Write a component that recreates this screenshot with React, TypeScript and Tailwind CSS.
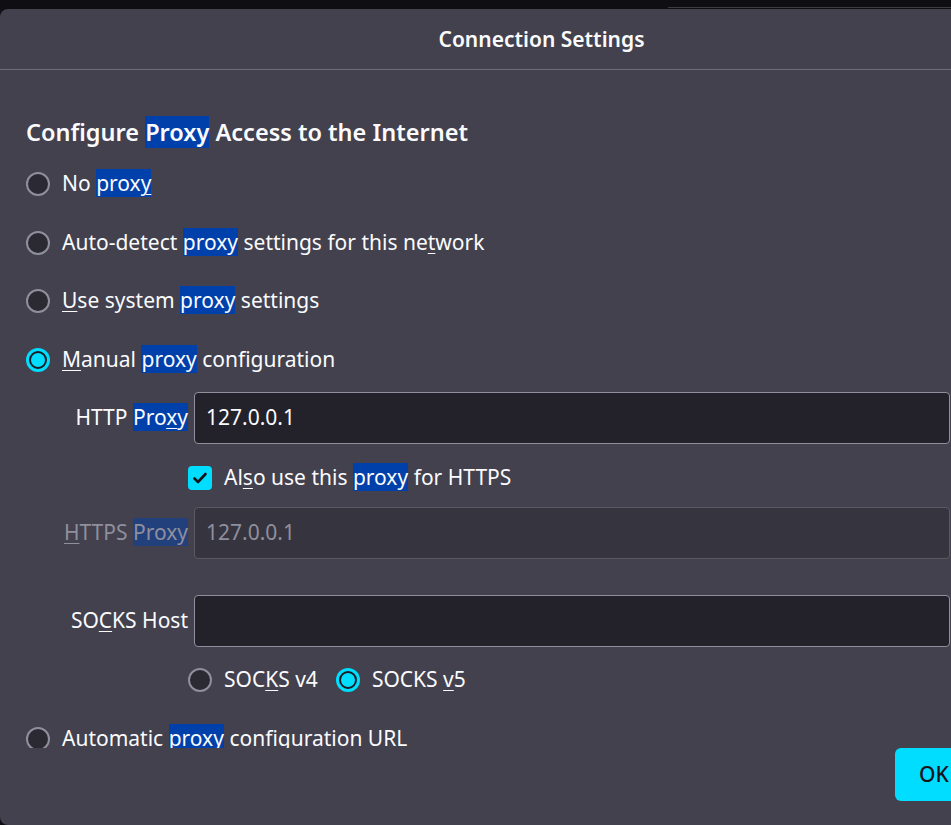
import React from "react";

const font = { fontFamily: '"Noto Sans", "Open Sans", sans-serif' };

function Hl({ children, dim = false }: { children: React.ReactNode; dim?: boolean }) {
    return <span className={dim ? "bg-[#22407c]" : "bg-[#0040aa]"}>{children}</span>;
}

function Radio({ checked = false }: { checked?: boolean }) {
    if (checked) {
        return (
            <div className="w-[24px] h-[24px] rounded-full bg-[#00ddff] flex items-center justify-center shrink-0">
                <div className="w-[18px] h-[18px] rounded-full border-[2px] border-[#1c1b22] bg-[#00ddff]" />
            </div>
        );
    }
    return <div className="w-[24px] h-[24px] rounded-full border-[2px] border-[#8f8f9d] bg-[#2b2a33] shrink-0" />;
}

function Checkbox() {
    return (
        <div className="w-[24px] h-[24px] rounded-[4px] bg-[#00ddff] flex items-center justify-center shrink-0">
            <svg width="16" height="16" viewBox="0 0 16 16" fill="none">
                <path d="M2.5 8.5 L6 12 L13.5 4" stroke="#15141a" strokeWidth="2.6" strokeLinecap="round" strokeLinejoin="round" />
            </svg>
        </div>
    );
}

function U({ children }: { children: React.ReactNode }) {
    return <span className="underline underline-offset-[3px] decoration-[1px]">{children}</span>;
}

function Field({ label, value, disabled = false }: { label: React.ReactNode; value: string; disabled?: boolean }) {
    return (
        <div className="flex items-center h-[52px]">
            <div className={`w-[168px] text-right pr-[6px] whitespace-nowrap ${disabled ? "text-[#8f8f9d]" : "text-[#fbfbfe]"}`}>{label}</div>
            <div
                className={`flex-1 h-[52px] rounded-[4px] border flex items-center pl-[11px] ${
                    disabled ? "bg-[#36353f] border-[#5b5a63] text-[#8f8f9d]" : "bg-[#23222b] border-[#8f8f9d] text-[#fbfbfe]"
                }`}
            >
                {value}
            </div>
        </div>
    );
}

export default function App() {
    return (
        <div className="w-[951px] h-[825px] bg-[#0f0e13] overflow-hidden text-[#fbfbfe]" style={font}>
            {/* window edge behind */}
            <div className="h-[9px] flex">
                <div className="ml-[668px] mt-[7px] h-[1px] flex-1 bg-[#3c3b42]" />
            </div>

            <div className="w-[1083px] h-[816px] bg-[#42414d] rounded-tl-[8px] rounded-bl-[8px] flex flex-col">
                {/* Header */}
                <div className="h-[61px] shrink-0 border-b border-[#6f6e76] flex items-center justify-center">
                    <span className="text-[21px] font-semibold pt-[1px]">Connection Settings</span>
                </div>

                {/* Content */}
                <div className="w-[950px] h-[678px] shrink-0 overflow-hidden pl-[26px] text-[21px]">
                    <div className="mt-[46px] h-[34px] flex items-center">
                        <h2 className="text-[23.5px] font-semibold whitespace-nowrap">
                            Configure <Hl>Proxy</Hl> Access to the Internet
                        </h2>
                    </div>

                    <div className="mt-[19px] h-[30px] flex items-center gap-[12px]">
                        <Radio />
                        <span>
                            No <Hl>prox<U>y</U></Hl>
                        </span>
                    </div>
                    <div className="mt-[29px] h-[30px] flex items-center gap-[12px]">
                        <Radio />
                        <span>
                            Auto-detect <Hl>proxy</Hl> settings for this ne<U>t</U>work
                        </span>
                    </div>
                    <div className="mt-[28px] h-[30px] flex items-center gap-[12px]">
                        <Radio />
                        <span>
                            <U>U</U>se system <Hl>proxy</Hl> settings
                        </span>
                    </div>
                    <div className="mt-[29px] h-[30px] flex items-center gap-[12px]">
                        <Radio checked />
                        <span>
                            <U>M</U>anual <Hl>proxy</Hl> configuration
                        </span>
                    </div>

                    <div className="mt-[17px]">
                        <Field
                            label={
                                <>
                                    HTTP <Hl>Pro<U>x</U>y</Hl>
                                </>
                            }
                            value="127.0.0.1"
                        />
                    </div>

                    <div className="mt-[19px] h-[30px] flex items-center gap-[12px] pl-[162px]">
                        <Checkbox />
                        <span>
                            Al<U>s</U>o use this <Hl>proxy</Hl> for HTTPS
                        </span>
                    </div>

                    <div className="mt-[14px]">
                        <Field
                            disabled
                            label={
                                <>
                                    <U>H</U>TTPS <Hl dim>Proxy</Hl>
                                </>
                            }
                            value="127.0.0.1"
                        />
                    </div>

                    <div className="mt-[36px]">
                        <Field
                            label={
                                <>
                                    SO<U>C</U>KS Host
                                </>
                            }
                            value=""
                        />
                    </div>

                    <div className="mt-[18px] h-[30px] flex items-center pl-[162px]">
                        <Radio />
                        <span className="ml-[12px]">
                            SOC<U>K</U>S v4
                        </span>
                        <div className="ml-[18px]">
                            <Radio checked />
                        </div>
                        <span className="ml-[12px]">
                            SOCKS <U>v</U>5
                        </span>
                    </div>

                    <div className="mt-[29px] h-[30px] flex items-center gap-[12px]">
                        <Radio />
                        <span>
                            Automatic <Hl>proxy</Hl> configuration URL
                        </span>
                    </div>
                </div>

                {/* Footer */}
                <div className="flex pl-[895px]">
                    <button className="h-[53px] px-[24px] rounded-[6px] bg-[#00ddff] text-[#15141a] text-[21px] font-medium">
                        OK
                    </button>
                    <button className="ml-[8px] h-[53px] px-[24px] rounded-[6px] bg-[#2b2a33] text-[#fbfbfe] text-[21px]">
                        Cancel
                    </button>
                </div>
            </div>
        </div>
    );
}
